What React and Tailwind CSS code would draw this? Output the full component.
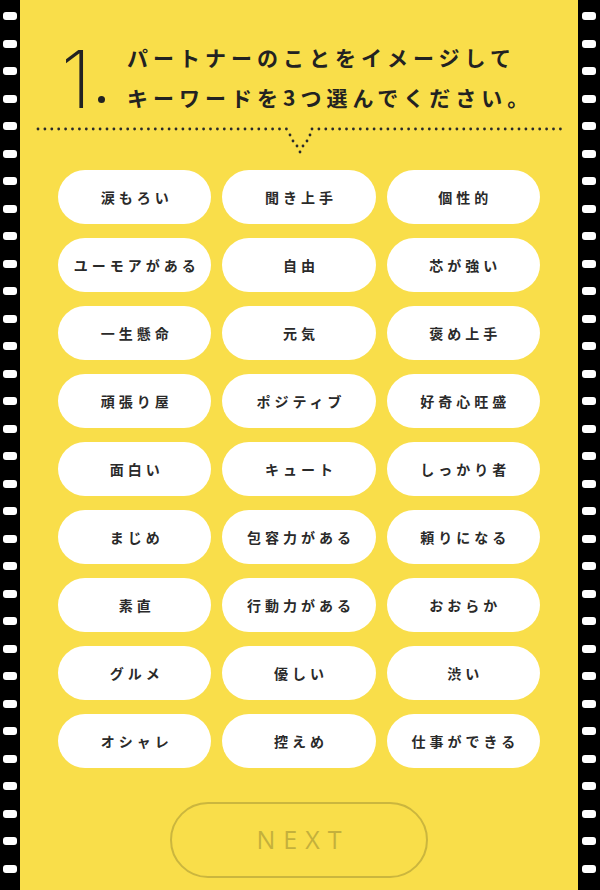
import React from 'react';

const keywords = [
  '涙もろい', '聞き上手', '個性的',
  'ユーモアがある', '自由', '芯が強い',
  '一生懸命', '元気', '褒め上手',
  '頑張り屋', 'ポジティブ', '好奇心旺盛',
  '面白い', 'キュート', 'しっかり者',
  'まじめ', '包容力がある', '頼りになる',
  '素直', '行動力がある', 'おおらか',
  'グルメ', '優しい', '渋い',
  'オシャレ', '控えめ', '仕事ができる',
];

const jp = { fontFamily: '"Noto Sans CJK JP", "Noto Sans", sans-serif' };

// sprocket holes down one edge of the film
const FilmEdge = ({ className }) => (
  <div className={`flex shrink-0 flex-col items-center gap-[19.5px] overflow-hidden bg-black ${className}`}>
    <div className="mt-[-7.5px]" />
    {Array.from({ length: 34 }).map((_, i) => (
      <div key={i} className="h-[8px] w-[14px] shrink-0 rounded-[3px] bg-white" />
    ))}
  </div>
);

// dotted rule with a little V notch in the middle
const DottedRule = () => {
  const dots = [];
  for (let x = 18; x <= 268; x += 6.9) dots.push([x, 4]);
  for (let x = 292; x <= 542; x += 6.9) dots.push([x, 4]);
  const v = [
    [270, 10], [273, 16], [277, 21], [280, 27],
    [283, 21], [287, 16], [290, 10],
  ];
  return (
    <svg width="558" height="32" viewBox="0 0 558 32" className="block">
      {[...dots, ...v].map(([cx, cy], i) => (
        <circle key={i} cx={cx} cy={cy} r="1.4" fill="#2a2a2a" />
      ))}
    </svg>
  );
};

const App = () => {
  return (
    <div className="flex h-[890px] w-[600px] overflow-hidden bg-[#f9de4a]">
      <FilmEdge className="w-[20px]" />

      <main className="flex w-[558px] flex-col items-center">
        <div className="mt-[37px] flex w-full pl-[41px]">
          <div className="relative h-[80px] w-[66px]">
            <span
              className="absolute left-0 top-[2px] text-[80px] font-extralight leading-none text-[#222]"
              style={{ fontFamily: 'Inter, sans-serif' }}
            >
              1
            </span>
            <span className="absolute left-[37px] top-[59px] h-[7px] w-[7px] rounded-full bg-[#222]" />
          </div>
          <div
            className="text-[21px] font-bold leading-[40px] tracking-[5px] text-[#222]"
            style={jp}
          >
            <p>パートナーのことをイメージして</p>
            <p>キーワードを3つ選んでください。</p>
          </div>
        </div>

        <div className="mt-[8px]">
          <DottedRule />
        </div>

        <div className="mt-[13px] grid w-[482px] grid-cols-3 gap-x-[11px] gap-y-[14px]">
          {keywords.map((word, index) => (
            <div
              key={index}
              className="flex h-[54px] items-center justify-center rounded-full bg-white pl-[4px] text-[14px] font-bold tracking-[4px] text-[#2a2a2a]"
              style={jp}
            >
              {word}
            </div>
          ))}
        </div>

        <button
          className="mt-[34px] flex h-[76px] w-[258px] items-center justify-center rounded-full border-2 border-[#cbb63e] pl-[8px] text-[25px] tracking-[8px] text-[#c4b03c]"
          style={{ fontFamily: '"Open Sans", sans-serif' }}
        >
          NEXT
        </button>
      </main>

      <FilmEdge className="w-[22px]" />
    </div>
  );
};

export default App;
